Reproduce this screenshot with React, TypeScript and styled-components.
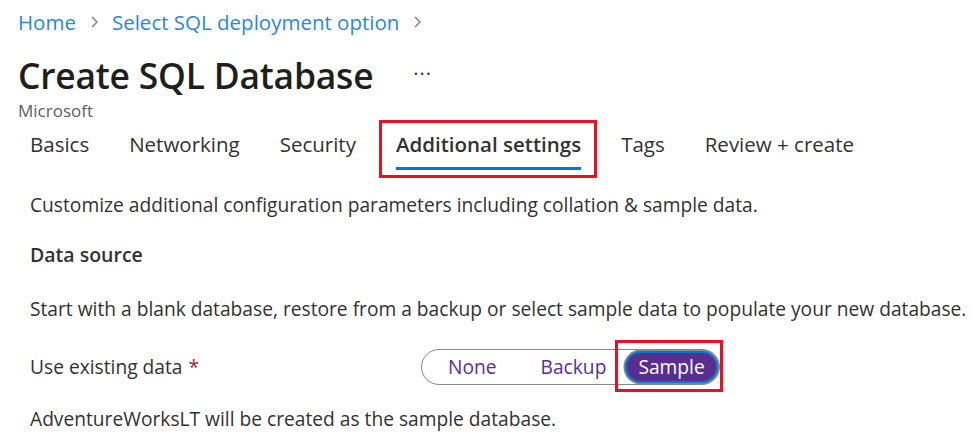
import React from "react";
import styled, { createGlobalStyle } from "styled-components";

const Global = createGlobalStyle`
  html, body { margin: 0; padding: 0; background: #ffffff; }
  body { font-family: "Open Sans", "Noto Sans", sans-serif; color: #323130; }
`;

const Page = styled.div`
  width: 973px;
  height: 443px;
  overflow: hidden;
  display: flex;
  flex-direction: column;
  padding: 8px 0 0 18px;
  box-sizing: border-box;
`;

const Breadcrumb = styled.nav`
  display: flex;
  align-items: center;
  gap: 13px;
  font-size: 20.5px;
  line-height: 28px;
  color: #2b88d8;
`;

const Crumb = styled.span`
  color: #2b88d8;
`;

const Chevron = styled.svg`
  width: 10px;
  height: 16px;
  stroke: #8a8886;
  fill: none;
  stroke-width: 1.5;
`;

const TitleRow = styled.div`
  display: flex;
  align-items: center;
  gap: 40px;
  margin-top: 17px;
`;

const Title = styled.h1`
  margin: 0;
  font-size: 35.4px;
  font-weight: 600;
  line-height: 44px;
  color: #201f1e;
  letter-spacing: -0.2px;
`;

const More = styled.span`
  font-size: 20px;
  color: #323130;
  letter-spacing: 1px;
  position: relative;
  top: -2px;
`;

const Publisher = styled.div`
  font-size: 17px;
  line-height: 20px;
  color: #605e5c;
  margin-top: 4px;
`;

const Tabs = styled.div`
  display: flex;
  align-items: flex-start;
  margin-left: 12px;
`;

const Tab = styled.div<{ $active?: boolean }>`
  position: relative;
  font-size: 20.5px;
  line-height: 28px;
  padding: 9px 0 9px;
  margin-right: 40px;
  font-weight: ${(p) => (p.$active ? 600 : 400)};
  color: #323130;
  border-bottom: 3px solid ${(p) => (p.$active ? "#0078d4" : "transparent")};
`;

const Highlight = styled.div<{ $l: number; $t: number; $r: number; $b: number }>`
  position: absolute;
  left: ${(p) => -p.$l}px;
  top: ${(p) => -p.$t}px;
  right: ${(p) => -p.$r}px;
  bottom: ${(p) => -p.$b}px;
  border: 3px solid #e81123;
  pointer-events: none;
`;

const Body = styled.div`
  margin-left: 12px;
  display: flex;
  flex-direction: column;
`;

const Text = styled.p<{ $mt: number }>`
  margin: ${(p) => p.$mt}px 0 0;
  font-size: 19.2px;
  line-height: 26px;
  color: #323130;
  white-space: nowrap;
`;

const Section = styled.h2`
  margin: 24px 0 0;
  font-size: 19.5px;
  line-height: 26px;
  font-weight: 600;
  color: #323130;
`;

const FieldRow = styled.div`
  display: flex;
  align-items: center;
  margin-top: 27px;
`;

const Label = styled.div`
  width: 391px;
  font-size: 19.2px;
  line-height: 26px;
  color: #323130;
`;

const Required = styled.span`
  color: #a4262c;
  margin-left: 6px;
`;

const Toggle = styled.div`
  display: flex;
  align-items: center;
  height: 36px;
  box-sizing: border-box;
  border: 1.5px solid #8a8886;
  border-radius: 18px;
  padding: 0 3px 0 26px;
`;

const Option = styled.div<{ $selected?: boolean; $gap?: number }>`
  position: relative;
  font-size: 19.2px;
  line-height: 24px;
  color: ${(p) => (p.$selected ? "#ffffff" : "#5c2d91")};
  background: ${(p) => (p.$selected ? "#5c2d91" : "transparent")};
  border-radius: 14px;
  padding: ${(p) => (p.$selected ? "2px 11px" : "0")};
  margin-right: ${(p) => p.$gap ?? 0}px;
  box-shadow: ${(p) => (p.$selected ? "0 0 0 2px #0078d4, 0 0 0 3.5px #8a8886" : "none")};
`;

export default function App() {
  return (
    <>
      <Global />
      <Page>
        <Breadcrumb>
          <Crumb>Home</Crumb>
          <Chevron viewBox="0 0 10 16">
            <path d="M3 3 L8 8 L3 13" />
          </Chevron>
          <Crumb>Select SQL deployment option</Crumb>
          <Chevron viewBox="0 0 10 16">
            <path d="M3 3 L8 8 L3 13" />
          </Chevron>
        </Breadcrumb>
        <TitleRow>
          <Title>Create SQL Database</Title>
          <More>···</More>
        </TitleRow>
        <Publisher>Microsoft</Publisher>
        <Tabs>
          <Tab>Basics</Tab>
          <Tab>Networking</Tab>
          <Tab>Security</Tab>
          <Tab $active>
            Additional settings
            <Highlight $l={17} $t={1} $r={16} $b={11} />
          </Tab>
          <Tab>Tags</Tab>
          <Tab>Review + create</Tab>
        </Tabs>
        <Body>
          <Text $mt={22}>
            Customize additional configuration parameters including collation &amp; sample data.
          </Text>
          <Section>Data source</Section>
          <Text $mt={28}>
            Start with a blank database, restore from a backup or select sample data to populate your new database.
          </Text>
          <FieldRow>
            <Label>
              Use existing data<Required>*</Required>
            </Label>
            <Toggle>
              <Option $gap={44}>None</Option>
              <Option $gap={21}>Backup</Option>
              <Option $selected>
                Sample
                <Highlight $l={12} $t={13} $r={7} $b={11} />
              </Option>
            </Toggle>
          </FieldRow>
          <Text $mt={21}>AdventureWorksLT will be created as the sample database.</Text>
        </Body>
      </Page>
    </>
  );
}
